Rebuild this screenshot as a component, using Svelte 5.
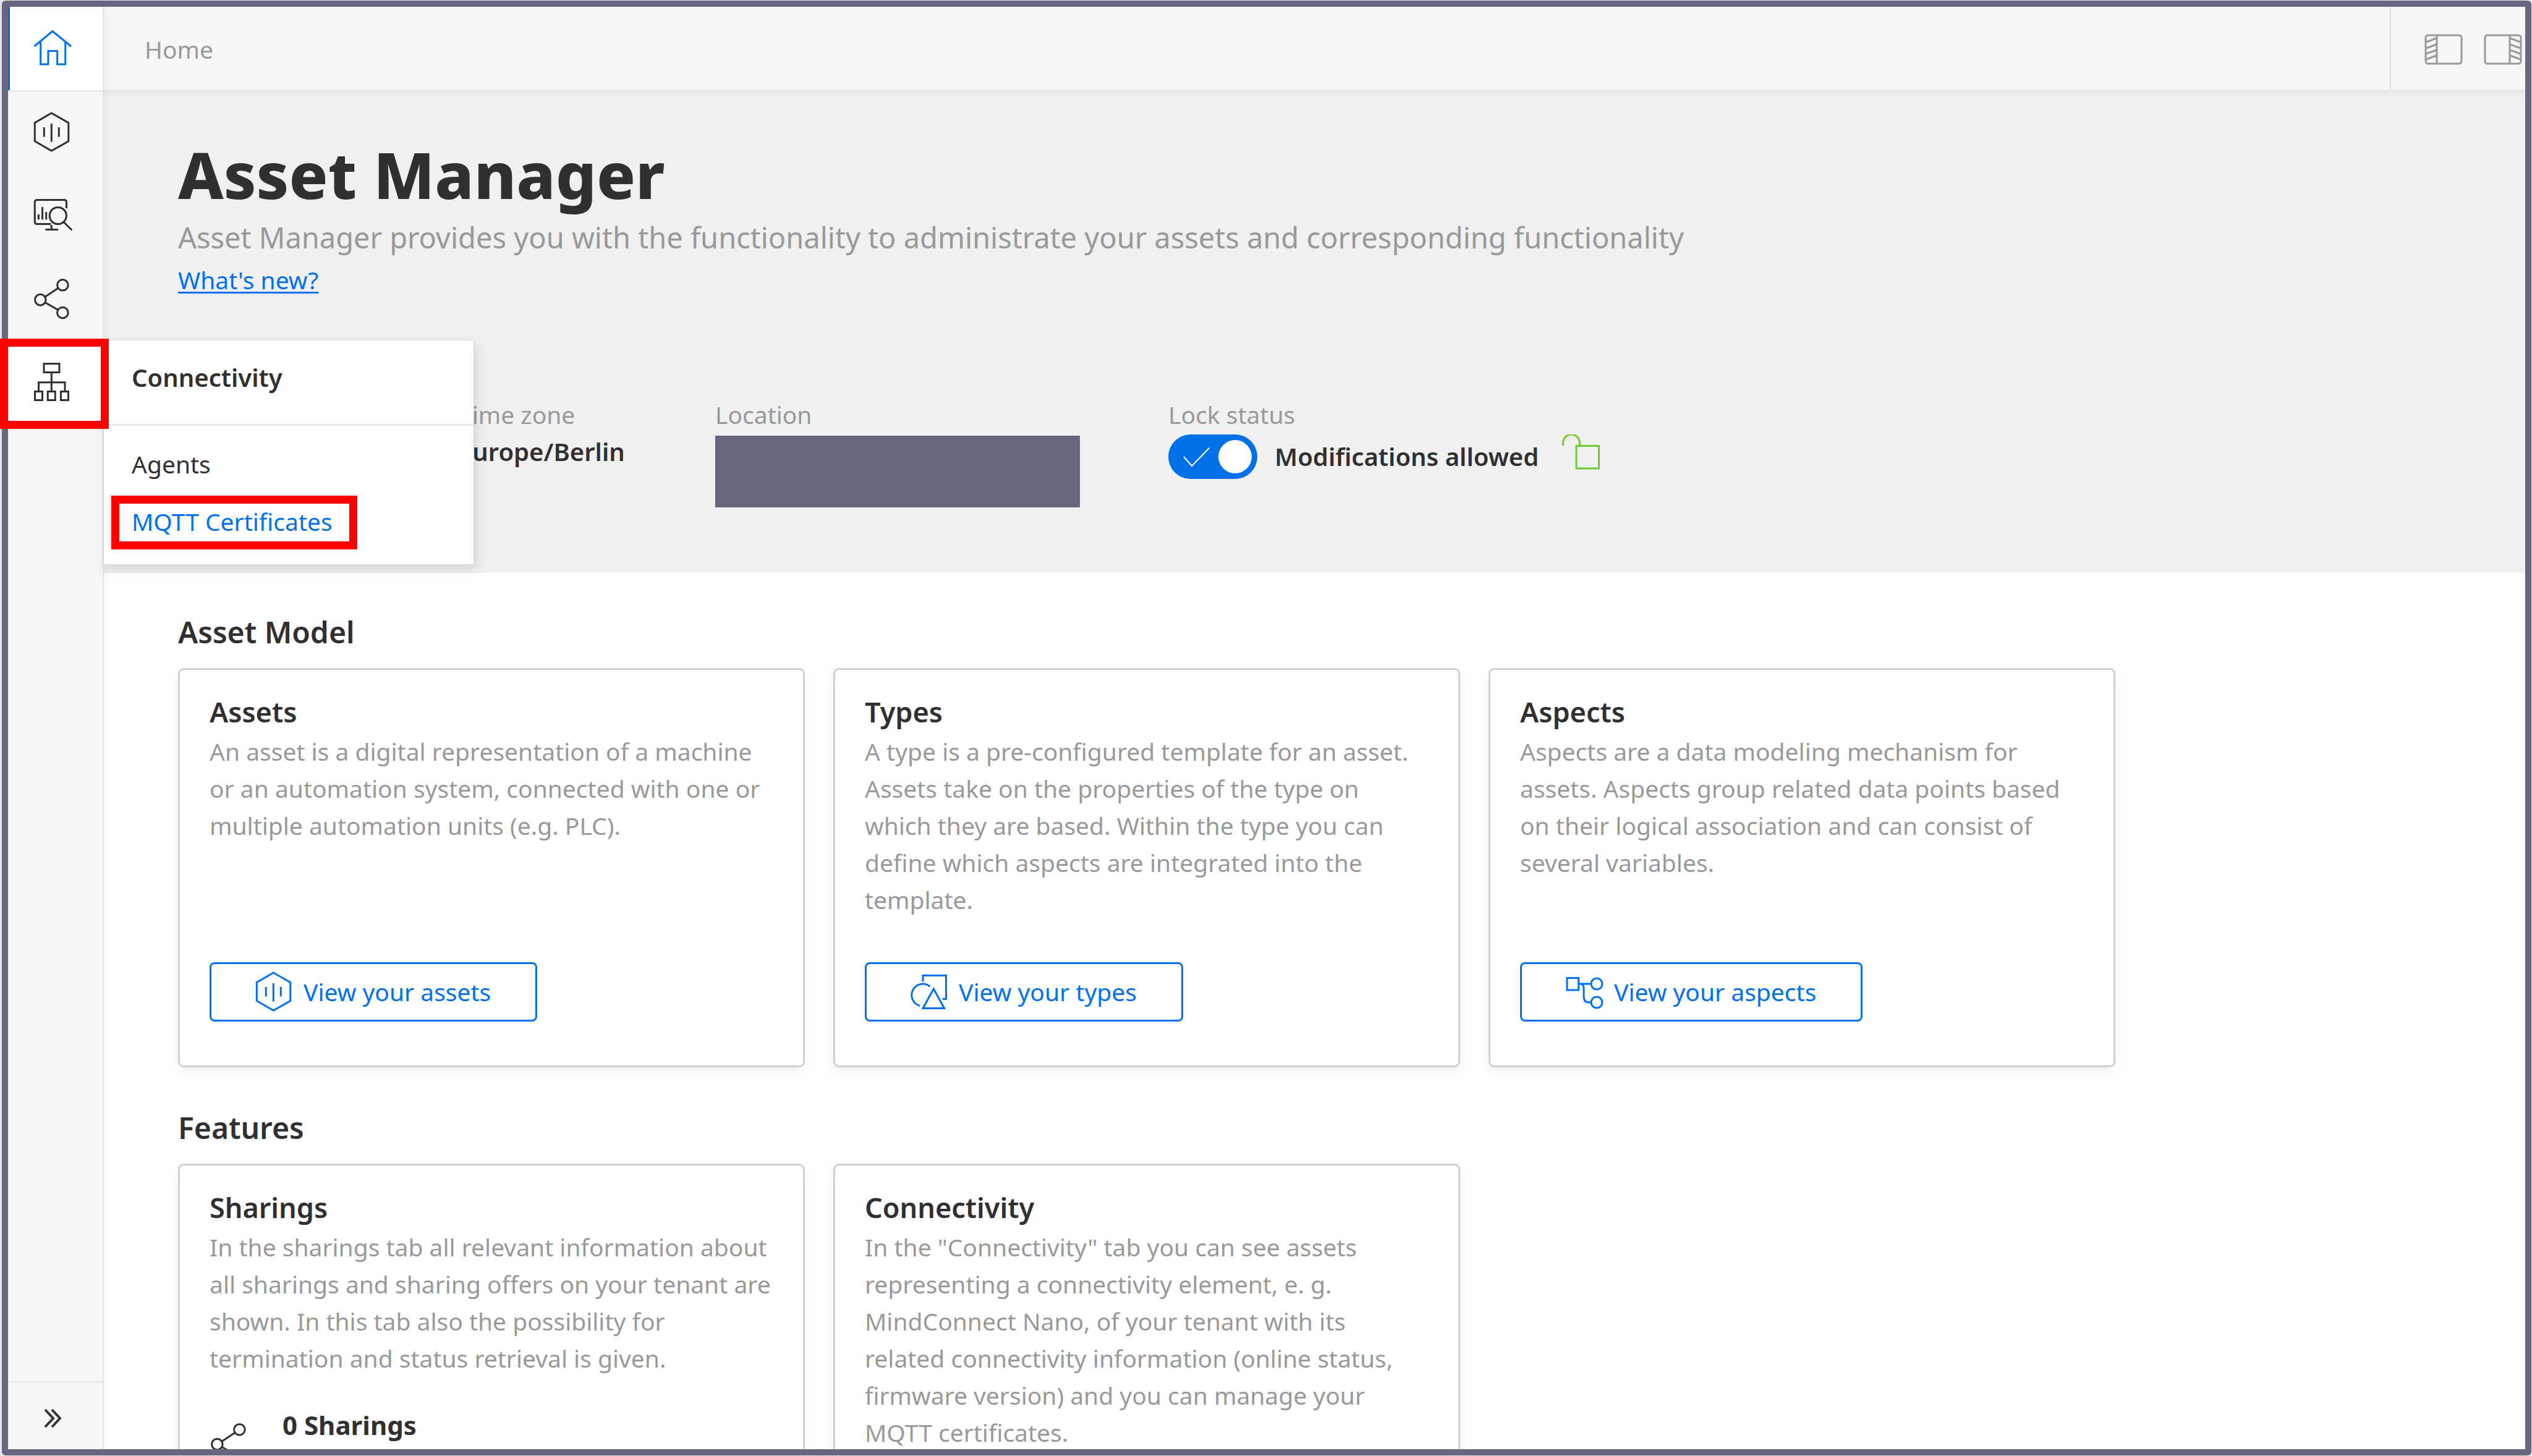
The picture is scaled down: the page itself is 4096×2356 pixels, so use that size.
<script>
  const navItems = [
    { icon: 'home', label: 'Home', current: true },
    { icon: 'asset', label: 'Assets' },
    { icon: 'monitor', label: 'Types' },
    { icon: 'share', label: 'Sharings' },
    { icon: 'network', label: 'Connectivity', open: true }
  ];

  const models = [
    {
      title: 'Assets',
      text: 'An asset is a digital representation of a machine or an automation system, connected with one or multiple automation units (e.g. PLC).',
      icon: 'asset',
      action: 'View your assets'
    },
    {
      title: 'Types',
      text: 'A type is a pre-configured template for an asset. Assets take on the properties of the type on which they are based. Within the type you can define which aspects are integrated into the template.',
      icon: 'types',
      action: 'View your types'
    },
    {
      title: 'Aspects',
      text: 'Aspects are a data modeling mechanism for assets. Aspects group related data points based on their logical association and can consist of several variables.',
      icon: 'aspects',
      action: 'View your aspects'
    }
  ];

  let unlocked = $state(true);
</script>

{#snippet icon(name)}
  <svg class="icon" viewBox="0 0 64 72" aria-hidden="true">
    {#if name === 'home'}
      <path d="M2.5 32 32 7.5 62 32M12.7 25V61H25V39.5H39.7V61H52.7V25" />
    {:else if name === 'asset'}
      <path d="M30.3 5 57.8 20.6V50.5L30.3 66 3.3 50.5V20.6ZM18.3 28V43.5M30.3 22V51.5M42.3 28V43.5" />
    {:else if name === 'monitor'}
      <path d="M54.5 24V14Q54.5 10.5 51 10.5H7Q3.3 10.5 3.3 14V46Q3.3 49.5 7 49.5H29.5M30.3 51V58.5M20.5 58.5H41M9.4 34V42.3M15.6 22V42.3M21.7 30V42.3M50.3 46.5 63.5 59.5" />
      <circle cx="40.8" cy="36" r="13.6" />
    {:else if name === 'share'}
      <circle cx="48.4" cy="13.3" r="8.8" />
      <circle cx="12.3" cy="37.1" r="8.8" />
      <circle cx="48.4" cy="58" r="8.8" />
      <path d="M19.8 32.4 41 18.2M20 41.5 40.8 53.4" />
    {:else if name === 'network'}
      <path d="M18 5.5H43V19.5H18ZM30.3 19.5V50.5M9.5 50.5V35.7H52V50.5M3.5 50.5H15.5V64.5H3.5ZM24.3 50.5H36.3V64.5H24.3ZM45.5 50.5H57.5V64.5H45.5Z" />
    {:else if name === 'types'}
      <path d="M21 19.5V9.5H58.5V47.5H52.7M32.5 27.5A18 18 0 1 0 16 58.5M38.3 31 55.6 62.5H21Z" />
    {:else if name === 'aspects'}
      <path d="M3 13.5H21.7V33H3ZM21.7 23H42M25 23Q30 23.500 30 30V43Q30 53 38 53H42" />
      <circle cx="51" cy="23" r="9" />
      <circle cx="51" cy="53" r="9" />
    {/if}
  </svg>
{/snippet}

<div class="frame">
  <nav class="sidebar" aria-label="Main">
    <ul>
      {#each navItems as item}
        <li class:current={item.current} class:open={item.open}>
          <a class="nav-link" href="#{item.icon}" aria-label={item.label}>{@render icon(item.icon)}</a>
          {#if item.open}
            <div class="menu">
              <h2>Connectivity</h2>
              <div class="menu-links">
                <a href="#agents">Agents</a>
                <a class="selected" href="#mqtt">MQTT Certificates</a>
              </div>
            </div>
          {/if}
        </li>
      {/each}
    </ul>
    <button class="expand" aria-label="Expand navigation">
      <svg viewBox="0 0 32 32" aria-hidden="true"><path d="M3 2 16 16 3 30M14 2 27 16 14 30" /></svg>
    </button>
  </nav>

  <div class="page">
    <header class="topbar">
      <span class="crumb">Home</span>
      <div class="panels">
        <button aria-label="Toggle left panel">
          <svg viewBox="0 0 64 50" aria-hidden="true">
            <rect x="3" y="2" width="58" height="46" rx="4" />
            <path d="M21 2V48M4 13 20 7M4 23 20 17M4 32 20 26M4 41 20 35" />
          </svg>
        </button>
        <button aria-label="Toggle right panel">
          <svg viewBox="0 0 64 50" aria-hidden="true">
            <rect x="3" y="2" width="58" height="46" rx="4" />
            <path d="M43 2V48M60 13 44 7M60 23 44 17M60 32 44 26M60 41 44 35" />
          </svg>
        </button>
      </div>
    </header>

    <main>
      <section class="hero">
        <h1>Asset Manager</h1>
        <p class="lead">Asset Manager provides you with the functionality to administrate your assets and corresponding functionality</p>
        <a class="news" href="#news">What's new?</a>
        <div class="facts">
          <div class="fact">
            <span class="label">Time zone</span>
            <strong>Europe/Berlin</strong>
          </div>
          <div class="fact">
            <span class="label">Location</span>
            <div class="redacted"></div>
          </div>
          <div class="fact">
            <span class="label">Lock status</span>
            <label class="lock">
              <input type="checkbox" bind:checked={unlocked} />
              <span class="switch">
                <svg viewBox="0 0 48 40" aria-hidden="true"><path d="M3 20 16 35 44 6" /></svg>
                <span class="thumb"></span>
              </span>
              <strong>Modifications allowed</strong>
              <svg class="padlock" viewBox="0 0 64 72" aria-hidden="true">
                <path d="M3.500 18V14A13.500 14 0 0 1 30.500 14V18M25 18.500H61.500V55H25Z" />
              </svg>
            </label>
          </div>
        </div>
      </section>

      <section class="group">
        <h2>Asset Model</h2>
        <div class="cards">
          {#each models as model}
            <article class="card">
              <h3>{model.title}</h3>
              <p class="tall">{model.text}</p>
              <button class="action">{@render icon(model.icon)}<span>{model.action}</span></button>
            </article>
          {/each}
        </div>
      </section>

      <section class="group">
        <h2>Features</h2>
        <div class="cards">
          <article class="card">
            <h3>Sharings</h3>
            <p>In the sharings tab all relevant information about all sharings and sharing offers on your tenant are shown. In this tab also the possibility for termination and status retrieval is given.</p>
            <div class="summary">
              {@render icon('share')}
              <strong>0 Sharings</strong>
            </div>
          </article>
          <article class="card">
            <h3>Connectivity</h3>
            <p>In the "Connectivity" tab you can see assets representing a connectivity element, e. g. MindConnect Nano, of your tenant with its related connectivity information (online status, firmware version) and you can manage your MQTT certificates.</p>
          </article>
        </div>
      </section>
    </main>
  </div>
</div>

<style>
  :global(body) {
    margin: 0;
    background: #e4e4e8;
    overflow: hidden;
  }

  :global(#app) {
    height: 100vh;
    display: flex;
    box-sizing: border-box;
    padding: 1px 1px 1px 3px;
  }

  .frame,
  .frame * {
    box-sizing: border-box;
  }

  .frame {
    flex: 1;
    min-width: 0;
    display: flex;
    border: 10px solid #66667f;
    border-radius: 6px;
    background: #fff;
    color: #303030;
    font: 39px/60px 'Noto Sans', sans-serif;
  }

  h1,
  h2,
  h3,
  p,
  ul {
    margin: 0;
    padding: 0;
  }

  h2,
  h3,
  strong {
    font-weight: 600;
  }

  strong {
    font-size: 40px;
  }

  a {
    color: inherit;
    text-decoration: none;
  }

  button {
    font: inherit;
    background: none;
    border: 0;
    padding: 0;
  }

  svg {
    flex: none;
    fill: none;
    stroke: currentColor;
    stroke-width: 3;
  }

  .icon {
    width: 64px;
    height: 72px;
  }

  .sidebar {
    position: relative;
    z-index: 2;
    width: 155px;
    flex: none;
    display: flex;
    flex-direction: column;
    justify-content: space-between;
    background: #f6f6f6;
    border-right: 2px solid #e4e4e4;
    box-shadow: 4px 0 10px rgba(0, 0, 0, 0.04);
  }

  ul {
    list-style: none;
  }

  li {
    position: relative;
    height: 135px;
  }

  .nav-link {
    display: flex;
    align-items: center;
    height: 100%;
    padding-left: 40px;
  }

  .current {
    background: #fff;
    color: #0070ee;
    box-shadow: 0 2px #e8e8e8;
  }

  .current .nav-link {
    border-left: 3px solid #0068e8;
    padding-left: 37px;
  }

  .open {
    background: #fff;
  }

  .open::after {
    content: '';
    position: absolute;
    inset: -3px -10px -8px -13px;
    border: 13px solid #f00;
    z-index: 2;
    pointer-events: none;
  }

  .menu {
    position: absolute;
    left: 155px;
    top: 0;
    width: 598px;
    background: #fff;
    box-shadow: 4px 8px 20px rgba(0, 0, 0, 0.12), 0 0 3px rgba(0, 0, 0, 0.1);
  }

  .menu h2 {
    padding: 30px 45px 45px;
    font-size: 40px;
    line-height: 60px;
    border-bottom: 3px solid #e8e8e8;
  }

  .menu-links {
    display: flex;
    flex-direction: column;
    align-items: flex-start;
    gap: 33px;
    padding: 32px 45px 39px;
  }

  .menu-links a {
    position: relative;
  }

  .menu-links .selected {
    color: #0070ee;
  }

  .selected::after {
    content: '';
    position: absolute;
    inset: -12px -40px -15px -33px;
    border: 13px solid #f00;
  }

  .expand {
    height: 110px;
    border-top: 2px solid #e8e8e8;
    display: flex;
    align-items: center;
    padding: 8px 0 0 57px;
    color: #333;
  }

  .expand svg {
    width: 32px;
    height: 32px;
    stroke-width: 4;
  }

  .page {
    flex: 1;
    min-width: 0;
    display: flex;
    flex-direction: column;
    overflow: hidden;
  }

  .topbar {
    position: relative;
    z-index: 1;
    flex: none;
    height: 136px;
    display: flex;
    align-items: center;
    justify-content: space-between;
    padding-left: 66px;
    background: #f6f6f6;
    color: #999;
    border-bottom: 2px solid #e6e6e6;
    box-shadow: 0 3px 10px rgba(0, 0, 0, 0.06);
  }

  .crumb {
    padding-top: 3px;
  }

  .panels {
    align-self: stretch;
    display: flex;
    align-items: center;
    gap: 32px;
    padding: 4px 4px 0 53px;
    border-left: 2px solid #e2e2e2;
  }

  .panels button {
    display: flex;
    color: #999;
  }

  .panels svg {
    width: 64px;
    height: 50px;
  }

  main {
    flex: 1;
    min-height: 0;
    overflow: hidden;
  }

  .hero {
    min-height: 780px;
    padding: 75px 120px 0;
    background: #f0f0f0;
  }

  h1 {
    font-size: 104px;
    line-height: 120px;
    font-weight: 800;
  }

  .lead {
    margin-top: 6px;
    font-size: 47px;
    line-height: 72px;
    color: #999;
  }

  .news {
    display: inline-block;
    margin-top: 3px;
    color: #0070ee;
    text-decoration: underline;
    text-decoration-thickness: 3px;
    text-underline-offset: 4px;
  }

  .facts {
    display: grid;
    grid-template-columns: 415px 733px auto;
    justify-content: start;
    padding: 158px 0 0 454px;
  }

  .fact {
    display: flex;
    flex-direction: column;
    align-items: flex-start;
  }

  .label {
    color: #999;
  }

  .redacted {
    width: 590px;
    height: 116px;
    margin-top: 4px;
    background: #66667f;
  }

  .lock {
    display: flex;
    align-items: center;
    margin-top: 2px;
  }

  .lock input {
    position: absolute;
    opacity: 0;
  }

  .switch {
    display: flex;
    align-items: center;
    justify-content: space-between;
    width: 144px;
    height: 72px;
    margin-right: 28px;
    padding: 0 9px 0 22px;
    border-radius: 36px;
    background: #0070e8;
    color: #fff;
  }

  .switch svg {
    width: 48px;
    height: 40px;
    stroke-width: 2;
  }

  .thumb {
    width: 54px;
    height: 54px;
    border-radius: 50%;
    background: #fff;
  }

  .padlock {
    width: 64px;
    height: 72px;
    margin-left: 36px;
    color: #6cce2e;
  }

  .group {
    padding: 60px 120px 2px;
  }

  .group h2 {
    font-size: 48px;
    line-height: 72px;
  }

  .cards {
    display: grid;
    grid-template-columns: repeat(3, 1fr);
    gap: 46px;
    max-width: 3134px;
    margin-top: 22px;
  }

  .card {
    display: flex;
    flex-direction: column;
    align-items: flex-start;
    padding: 35px 48px 71px;
    border: 3px solid #d0d0d0;
    border-radius: 9px;
    background: #fff;
    box-shadow: 0 8px 22px rgba(0, 0, 0, 0.06);
  }

  .card h3 {
    font-size: 45px;
    line-height: 66px;
  }

  .card p {
    margin-top: 1px;
    color: #999;
  }

  .tall {
    min-height: 300px;
  }

  .action {
    display: flex;
    align-items: center;
    gap: 15px;
    height: 96px;
    margin-top: 71px;
    padding: 0 72px 0 70px;
    border: 3px solid #0070ee;
    border-radius: 8px;
    color: #0070ee;
  }

  .summary {
    display: flex;
    align-items: center;
    gap: 54px;
    margin-top: 48px;
  }

  .summary strong {
    align-self: flex-start;
    min-height: 120px;
    font-size: 42px;
    font-weight: 700;
  }
</style>
